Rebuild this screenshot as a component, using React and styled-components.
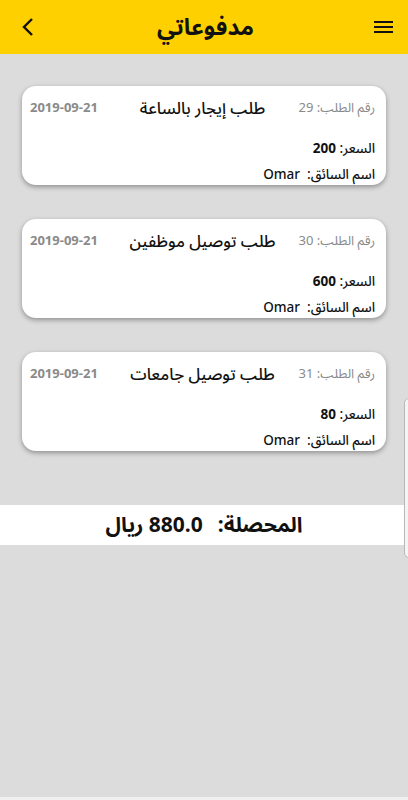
import React from "react";
import styled, { createGlobalStyle } from "styled-components";

const Global = createGlobalStyle`
  html, body { margin: 0; padding: 0; }
  body { background: #dcdcdc; font-family: "Noto Sans Arabic", "DejaVu Sans", "Noto Sans", sans-serif; }
  * { box-sizing: border-box; }
`;

const Page = styled.div`
  position: relative;
  width: 408px;
  height: 800px;
  background: #dcdcdc;
  display: flex;
  flex-direction: column;
  overflow: hidden;
`;

const Header = styled.header`
  height: 54px;
  background: #ffd000;
  display: flex;
  align-items: center;
  justify-content: space-between;
  padding: 0 15px 0 18px;
  direction: ltr;
`;

const IconBtn = styled.div`
  width: 20px;
  height: 20px;
  display: flex;
  align-items: center;
  justify-content: center;
`;

const Title = styled.h1`
  margin: 0;
  font-size: 23px;
  font-weight: 700;
  color: #111;
  direction: rtl;
`;

const List = styled.main`
  display: flex;
  flex-direction: column;
  gap: 34px;
  padding: 32px 22px 0 22px;
`;

const Card = styled.section`
  direction: rtl;
  height: 99px;
  background: #fff;
  border-radius: 14px;
  box-shadow: 0 2px 5px rgba(0, 0, 0, 0.35);
  padding: 10px 11px 0 8px;
  display: flex;
  flex-direction: column;
`;

const TopRow = styled.div`
  display: flex;
  align-items: center;
  justify-content: space-between;
  height: 24px;
`;

const OrderNo = styled.span`
  font-size: 13px;
  color: #8a8a8a;
  width: 90px;
  white-space: nowrap;
`;

const CardTitle = styled.span`
  flex: 1;
  text-align: center;
  font-size: 16.5px;
  font-weight: 500;
  color: #111;
`;

const DateText = styled.span`
  font-size: 13px;
  font-weight: 700;
  color: #8a8a8a;
  direction: ltr;
  width: 90px;
  text-align: left;
`;

const Line = styled.div`
  font-size: 13.5px;
  font-weight: 500;
  color: #111;
  margin-top: ${(p) => p.$mt}px;
  line-height: 20px;
  height: 20px;
`;

const Num = styled.span`
  font-weight: 700;
`;

const TotalBar = styled.div`
  margin-top: 54px;
  height: 40px;
  background: #fff;
  direction: rtl;
  display: flex;
  align-items: center;
  justify-content: center;
  gap: 15px;
  font-size: 21px;
  font-weight: 700;
  color: #111;
`;

const Spacer = styled.div`
  flex: 1;
`;

const BottomStrip = styled.div`
  height: 3px;
  background: #f0f0f0;
`;

const EdgeTab = styled.div`
  position: absolute;
  right: -6px;
  top: 398px;
  width: 10px;
  height: 160px;
  border: 1px solid #b8b8b8;
  border-radius: 5px;
  background: #f4f4f4;
`;

const orders = [
  { no: 29, title: "طلب إيجار بالساعة", price: 200 },
  { no: 30, title: "طلب توصيل موظفين", price: 600 },
  { no: 31, title: "طلب توصيل جامعات", price: 80 },
];

export default function App() {
  return (
    <Page>
      <Global />
      <Header>
        <IconBtn>
          <svg width="14" height="20" viewBox="0 0 14 20">
            <path d="M11 2 L3 10 L11 18" fill="none" stroke="#111" strokeWidth="2.4" />
          </svg>
        </IconBtn>
        <Title>مدفوعاتي</Title>
        <IconBtn>
          <svg width="19" height="14" viewBox="0 0 19 14">
            <rect x="0" y="1" width="19" height="2" fill="#111" />
            <rect x="0" y="6" width="19" height="2" fill="#111" />
            <rect x="0" y="11" width="19" height="2" fill="#111" />
          </svg>
        </IconBtn>
      </Header>
      <List>
        {orders.map((o) => (
          <Card key={o.no}>
            <TopRow>
              <OrderNo>رقم الطلب: {o.no}</OrderNo>
              <CardTitle>{o.title}</CardTitle>
              <DateText>2019-09-21</DateText>
            </TopRow>
            <Line $mt={19}>السعر: <Num>{o.price}</Num></Line>
            <Line $mt={6}>اسم السائق:&nbsp; Omar</Line>
          </Card>
        ))}
      </List>
      <TotalBar>
        <span>المحصلة:</span>
        <span>880.0 ريال</span>
      </TotalBar>
      <Spacer />
      <BottomStrip />
      <EdgeTab />
    </Page>
  );
}
